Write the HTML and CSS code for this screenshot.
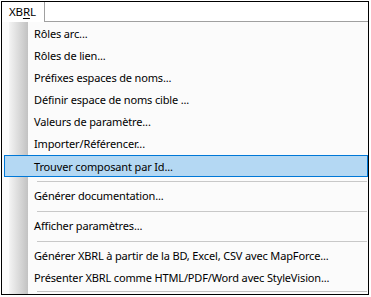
FILE: index.html
```html
<!DOCTYPE html>
<html lang="fr">
<head>
    <meta charset="UTF-8">
    <title>Menu XBRL</title>
    <link rel="stylesheet" href="styles.css">
</head>
<body>
    <div class="window">
        <div class="menubar">
            <span class="menu-title">XB<u>R</u>L</span>
            <span class="bar-rest"></span>
        </div>
        <ul class="dropdown">
            <li class="item">Rôles arc...</li>
            <li class="item">Rôles de lien...</li>
            <li class="item">Préfixes espaces de noms...</li>
            <li class="item">Définir espace de noms cible ...</li>
            <li class="item">Valeurs de paramètre...</li>
            <li class="item">Importer/Référencer...</li>
            <li class="item active">Trouver composant par Id...</li>
            <li class="sep"></li>
            <li class="item">Générer documentation...</li>
            <li class="sep"></li>
            <li class="item">Afficher paramètres...</li>
            <li class="sep"></li>
            <li class="item">Générer XBRL à partir de la BD, Excel, CSV avec MapForce...</li>
            <li class="item">Présenter XBRL comme HTML/PDF/Word avec StyleVision...</li>
            <li class="menu-end"></li>
        </ul>
    </div>
</body>
</html>
```

FILE: styles.css
```css
body {
    margin: 0;
    padding: 1px 0 0 1px;
    background: #fff;
    font-family: 'Noto Sans', 'DejaVu Sans', sans-serif;
    font-size: 11px;
    letter-spacing: -0.15px;
    color: #000;
}
.window {
    box-sizing: border-box;
    width: 368px;
    height: 294px;
    border: 1px solid #000;
    display: flex;
    flex-direction: column;
    overflow: hidden;
}
.menubar {
    display: flex;
    height: 20px;
    background: #fff;
}
.menu-title {
    box-sizing: border-box;
    width: 43px;
    padding-left: 7px;
    font-size: 11.5px;
    line-height: 19px;
    border-right: 1px solid #a0a0a0;
}
.menu-title u {
    text-underline-offset: 2px;
}
.bar-rest {
    flex: 1;
    border-bottom: 1px solid #a0a0a0;
}
.dropdown {
    flex: 1;
    list-style: none;
    margin: 0;
    padding: 1px 0 0 0;
    background: linear-gradient(to right, #fbfbfb 0, #fbfbfb 7px, #f4f4f4 7px, #c2c2c2 26px, #fbfbfb 26px, #fbfbfb 100%);
}
.item {
    box-sizing: border-box;
    height: 22px;
    line-height: 21px;
    padding-left: 32px;
    white-space: nowrap;
}
.item.active {
    margin-left: 2px;
    padding-left: 29px;
    background: #b4d8f3;
    border: 1px solid #0078d7;
}
.sep {
    height: 8px;
    margin: 0 1px 0 35px;
    background: linear-gradient(#c8c8c8, #c8c8c8) 0 4px / 100% 1px no-repeat;
}
.menu-end {
    margin: 2px 1px 0 35px;
    border-top: 1px solid #c0c0c0;
}
```
